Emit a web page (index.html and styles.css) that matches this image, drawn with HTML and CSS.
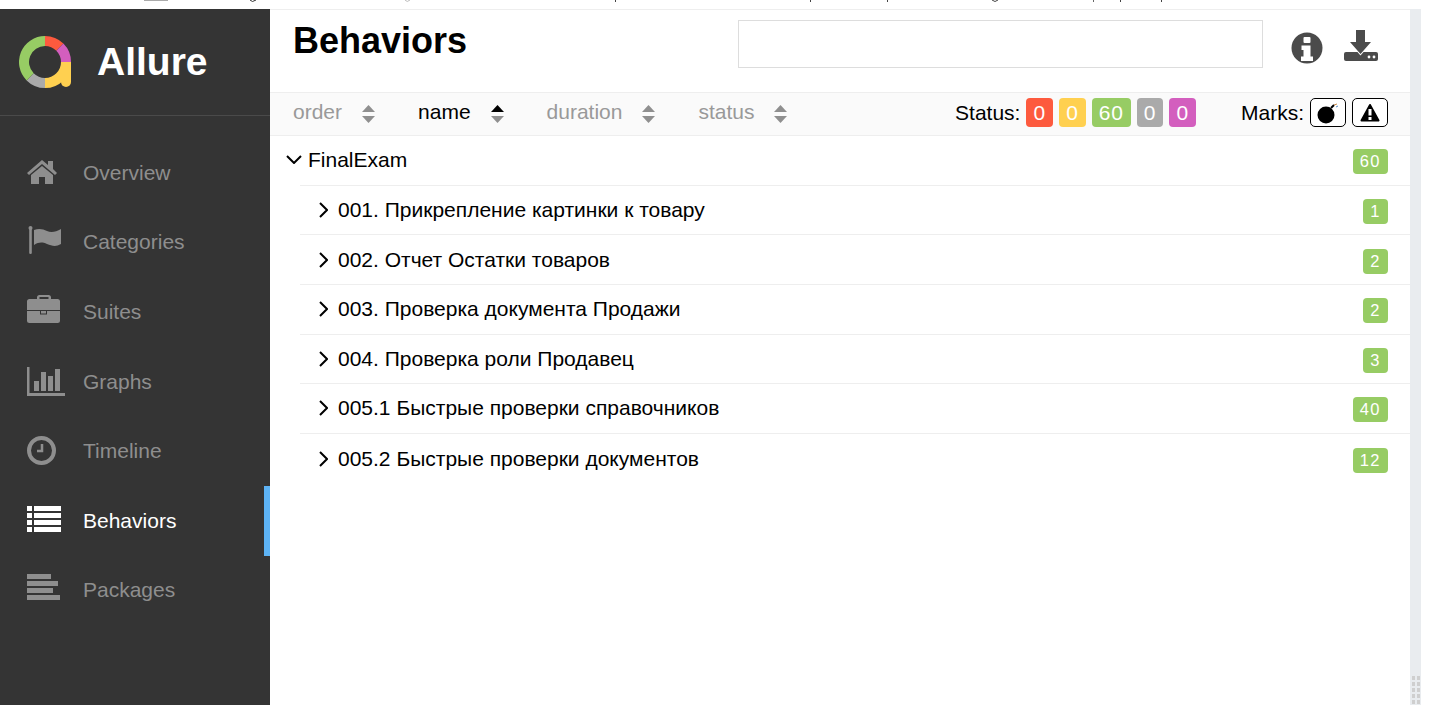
FILE: index.html
```html
<!DOCTYPE html>
<html lang="en">
<head>
  <meta charset="UTF-8" />
  <title>Allure Report - Behaviors</title>
  <link rel="stylesheet" href="styles.css">
</head>
<body>

  <!-- bottom of the page text above, cut off by the capture -->
  <svg class="top-strip" width="1449" height="9" viewBox="0 0 1449 9">
    <rect x="144" y="0" width="24" height="1" fill="#aaa" />
    <path d="M250 0q2 3 6 0" fill="none" stroke="#333" stroke-width="1" />
    <path d="M405 0q2 3 5 0" fill="none" stroke="#bbb" stroke-width="1" />
    <rect x="615" y="0" width="1" height="2" fill="#444" />
    <rect x="810" y="0" width="1" height="2" fill="#444" />
    <rect x="887" y="0" width="1" height="2" fill="#444" />
    <path d="M992 0q3 3 6 0" fill="none" stroke="#444" stroke-width="1" />
    <rect x="1093" y="0" width="1" height="2" fill="#666" />
    <rect x="1120" y="0" width="1" height="2" fill="#444" />
    <rect x="1161" y="0" width="1" height="2" fill="#444" />
  </svg>

  <div class="app">
    <aside class="side-nav">
      <div class="brand">
        <svg class="brand-logo" width="52" height="52" viewBox="0 0 52 52">
          <g fill="none" stroke-width="10">
            <path d="M26 5A21 21 0 0 1 40.85 11.15" stroke="#fd5a3e" />
            <path d="M40.85 11.15A21 21 0 0 1 47 26" stroke="#d35ebe" />
            <path d="M47 26A21 21 0 0 1 26 47" stroke="#ffd050" />
            <path d="M26 47A21 21 0 0 1 11.15 40.85" stroke="#aaa" />
            <path d="M11.15 40.85A21 21 0 0 1 26 5" stroke="#97cc64" />
          </g>
          <path d="M42 26H52V46a5 5 0 0 1-10 0Z" fill="#ffd050" />
        </svg>
        <span class="brand-name">Allure</span>
      </div>

      <ul class="nav-list">
        <li class="nav-item">
          <svg class="nav-icon" viewBox="0 0 40 32">
            <polygon points="15,3 21,8 21,4 26,4 26,12 30,16 28,18 15,7 2,18 0,16" />
            <polygon points="15,9 26,18 26,27 18,27 18,20 12,20 12,27 4,27 4,18" />
          </svg>
          Overview
        </li>
        <li class="nav-item">
          <svg class="nav-icon" viewBox="0 0 40 32">
            <rect x="2.2" y="1" width="2.6" height="27" rx="1.2" />
            <circle cx="3.5" cy="2" r="2" />
            <path d="M7 4C12 2 16 3 20 5S29 6 34 3V18C29 21 25 20 20 18S12 16 7 19Z" />
          </svg>
          Categories
        </li>
        <li class="nav-item">
          <svg class="nav-icon" viewBox="0 0 40 32">
            <path d="M10 3V1.5A2.5 2.5 0 0 1 12.5 -1H21.5A2.5 2.5 0 0 1 24 1.5V3H30.5A2.5 2.5 0 0 1 33 5.5V24.5A2.5 2.5 0 0 1 30.5 27H2.5A2.5 2.5 0 0 1 0 24.5V5.5A2.5 2.5 0 0 1 2.5 3ZM12.500 3H21.500V1H12.500Z" fill-rule="evenodd" />
            <rect x="0" y="14" width="33" height="1" class="nav-cut" />
            <rect x="13.500" y="14.500" width="6" height="3.500" fill="none" stroke="#343434" />
          </svg>
          Suites
        </li>
        <li class="nav-item">
          <svg class="nav-icon" viewBox="0 0 40 32">
            <rect x="0" y="1" width="2.500" height="29" />
            <rect x="0" y="27" width="38" height="3" />
            <rect x="7" y="15" width="5" height="10" />
            <rect x="14" y="6" width="5" height="19" />
            <rect x="21" y="10" width="5" height="15" />
            <rect x="28" y="3" width="5" height="22" />
          </svg>
          Graphs
        </li>
        <li class="nav-item">
          <svg class="nav-icon" viewBox="0 0 40 32">
            <circle cx="14.500" cy="15.500" r="12.500" fill="none" stroke="currentColor" stroke-width="4" />
            <path d="M15 9V16H10" fill="none" stroke="currentColor" stroke-width="2.500" />
          </svg>
          Timeline
        </li>
        <li class="nav-item active">
          <svg class="nav-icon" viewBox="0 0 40 32">
            <rect x="0" y="1" width="5" height="5" /><rect x="7" y="1" width="27" height="5" />
            <rect x="0" y="8" width="5" height="5" /><rect x="7" y="8" width="27" height="5" />
            <rect x="0" y="15" width="5" height="5" /><rect x="7" y="15" width="27" height="5" />
            <rect x="0" y="22" width="5" height="5" /><rect x="7" y="22" width="27" height="5" />
          </svg>
          Behaviors
        </li>
        <li class="nav-item">
          <svg class="nav-icon" viewBox="0 0 40 32">
            <rect x="0" y="0" width="24" height="5" />
            <rect x="0" y="7" width="31" height="5" />
            <rect x="0" y="14" width="26" height="5" />
            <rect x="0" y="21" width="33" height="5" />
          </svg>
          Packages
        </li>
      </ul>
    </aside>

    <main class="content">
      <header class="page-head">
        <h1 class="page-title">Behaviors</h1>
        <input class="search" type="text" />
        <svg class="head-info" width="32" height="32" viewBox="0 0 32 32">
          <circle cx="16" cy="16" r="15.500" fill="#4b4b4b" />
          <rect x="12.500" y="5" width="7" height="6" rx="1" fill="#fff" />
          <path d="M10.500 13.500H19.500V24.500H22V29H10V24.500H12.500V18H10.500Z" fill="#fff" />
        </svg>
        <svg class="head-download" width="34" height="32" viewBox="0 0 34 32">
          <rect x="0" y="22" width="34" height="9" rx="2" fill="#4b4b4b" />
          <polygon points="12,0 21,0 21,12 27,12 16.500,24 6,12 12,12" fill="#4b4b4b" stroke="#fff" stroke-width="2" paint-order="stroke" />
          <circle cx="25" cy="27" r="1.400" fill="#fff" />
          <circle cx="30" cy="27" r="1.400" fill="#fff" />
        </svg>
      </header>

      <div class="toolbar">
        <span class="sort">order <svg class="sort-arrows" width="13" height="18" viewBox="0 0 13 18"><path d="M6.500 0L13 7H0Z" /><path d="M6.500 18L13 11H0Z" /></svg></span>
        <span class="sort current">name <svg class="sort-arrows" width="13" height="18" viewBox="0 0 13 18"><path class="on" d="M6.500 0L13 7H0Z" /><path d="M6.500 18L13 11H0Z" /></svg></span>
        <span class="sort">duration <svg class="sort-arrows" width="13" height="18" viewBox="0 0 13 18"><path d="M6.500 0L13 7H0Z" /><path d="M6.500 18L13 11H0Z" /></svg></span>
        <span class="sort">status <svg class="sort-arrows" width="13" height="18" viewBox="0 0 13 18"><path d="M6.500 0L13 7H0Z" /><path d="M6.500 18L13 11H0Z" /></svg></span>

        <div class="filter status-filter">
          Status:
          <span class="stat failed">0</span>
          <span class="stat broken">0</span>
          <span class="stat passed">60</span>
          <span class="stat skipped">0</span>
          <span class="stat unknown">0</span>
        </div>
        <div class="filter">
          Marks:
          <span class="mark">
            <svg width="24" height="22" viewBox="0 0 24 22">
              <circle cx="10" cy="13" r="8.500" fill="#000" />
              <path d="M15 6l3-3" stroke="#000" stroke-width="2" />
              <path d="M18 3l3-1" stroke="#c98a4a" stroke-width="1" />
              <path d="M20 5l2-1" stroke="#5a8fc9" stroke-width="1" />
            </svg>
          </span>
          <span class="mark">
            <svg width="24" height="22" viewBox="0 0 24 22">
              <path d="M12 3L20.500 18.500H3.500Z" fill="#000" stroke="#000" stroke-width="2" stroke-linejoin="round" />
              <rect x="10.500" y="7" width="3" height="6.500" fill="#fff" />
              <rect x="10.500" y="15" width="3" height="3" fill="#fff" />
            </svg>
          </span>
        </div>
      </div>

      <div class="tree">
        <div class="tree-top">
          <svg class="chevron-down" width="16" height="9" viewBox="0 0 16 9"><path d="M1 1L8 8L15 1" /></svg>
          <span class="tree-name">FinalExam</span>
          <span class="count">60</span>
        </div>
        <div class="tree-children">
          <div class="tree-row">
            <svg class="chevron" width="10" height="16" viewBox="0 0 10 16"><path d="M2 1L9 8L2 15" /></svg>
            <span class="tree-name">001. Прикрепление картинки к товару</span>
            <span class="count">1</span>
          </div>
          <div class="tree-row">
            <svg class="chevron" width="10" height="16" viewBox="0 0 10 16"><path d="M2 1L9 8L2 15" /></svg>
            <span class="tree-name">002. Отчет Остатки товаров</span>
            <span class="count">2</span>
          </div>
          <div class="tree-row">
            <svg class="chevron" width="10" height="16" viewBox="0 0 10 16"><path d="M2 1L9 8L2 15" /></svg>
            <span class="tree-name">003. Проверка документа Продажи</span>
            <span class="count">2</span>
          </div>
          <div class="tree-row">
            <svg class="chevron" width="10" height="16" viewBox="0 0 10 16"><path d="M2 1L9 8L2 15" /></svg>
            <span class="tree-name">004. Проверка роли Продавец</span>
            <span class="count">3</span>
          </div>
          <div class="tree-row">
            <svg class="chevron" width="10" height="16" viewBox="0 0 10 16"><path d="M2 1L9 8L2 15" /></svg>
            <span class="tree-name">005.1 Быстрые проверки справочников</span>
            <span class="count">40</span>
          </div>
          <div class="tree-row">
            <svg class="chevron" width="10" height="16" viewBox="0 0 10 16"><path d="M2 1L9 8L2 15" /></svg>
            <span class="tree-name">005.2 Быстрые проверки документов</span>
            <span class="count">12</span>
          </div>
        </div>
      </div>
    </main>

    <div class="side-track">
      <svg class="grip" width="8" height="29" viewBox="0 0 8 29">
        <defs>
          <pattern id="gripDots" width="5" height="6" patternUnits="userSpaceOnUse">
            <rect width="3" height="4" fill="#cfcfcf" />
          </pattern>
        </defs>
        <rect width="8" height="29" fill="url(#gripDots)" />
      </svg>
    </div>
  </div>

</body>
</html>
```

FILE: styles.css
```css
* {
  box-sizing: border-box;
}

html, body {
  height: 705px;
}

body {
  margin: 0;
  overflow: hidden;
  background-color: #fff;
  color: #000;
  font-family: "Liberation Sans", Arial, sans-serif;
  font-size: 21px;
}

.top-strip {
  display: block;
}

.app {
  display: flex;
  height: 696px;
}

/* sidebar */
.side-nav {
  flex: 0 0 270px;
  background-color: #343434;
  color: #8e8e8e;
}

.brand {
  display: flex;
  align-items: center;
  gap: 26px;
  height: 107px;
  padding-left: 19px;
  border-bottom: 1px solid #4a4a4a;
}

.brand-name {
  color: #fff;
  font-size: 39px;
  font-weight: bold;
}

.nav-list {
  list-style: none;
  margin: 0;
  padding: 22px 0 0;
}

.nav-item {
  display: flex;
  align-items: center;
  gap: 16px;
  height: 69.6px;
  padding-left: 27px;
  border-right: 6px solid transparent;
}

.nav-item.active {
  color: #fff;
  border-right-color: #5db3f5;
}

.nav-icon {
  flex: none;
  width: 40px;
  height: 32px;
  fill: currentColor;
  overflow: visible;
}

.nav-cut {
  fill: #343434;
}

/* main column */
.content {
  flex: 0 0 1140px;
  min-width: 0;
}

.page-head {
  display: flex;
  align-items: flex-start;
  height: 83px;
  padding: 10px 32px 0 23px;
  border-top: 1px solid #eee;
}

.page-title {
  margin: 1px auto 0 0;
  font-size: 36px;
  font-weight: bold;
  line-height: 40px;
}

.search {
  width: 525px;
  height: 48px;
  margin-right: 28px;
  padding: 0;
  border: 1px solid #ddd;
}

.head-info {
  flex: none;
  margin-top: 12px;
  margin-right: 21px;
}

.head-download {
  flex: none;
  margin-top: 10px;
}

.toolbar {
  display: flex;
  align-items: center;
  height: 44px;
  padding: 0 22px 3px 23px;
  background-color: #fafafa;
  border-top: 1px solid #eee;
  border-bottom: 1px solid #eee;
}

.sort {
  display: flex;
  align-items: center;
  gap: 20px;
  margin-right: 43px;
  margin-bottom: 2px;
  color: #999;
}

.sort.current {
  color: #000;
}

.sort-arrows {
  margin-top: 5px;
  fill: #8f8f8f;
}

.sort-arrows .on {
  fill: #000;
}

.filter {
  display: flex;
  align-items: center;
  gap: 6px;
}

.status-filter {
  margin-left: auto;
  margin-right: 45px;
}

.stat {
  height: 29px;
  padding: 0 7.1px;
  border-radius: 4px;
  color: #fff;
  letter-spacing: 0.75px;
  line-height: 29px;
}

.failed { background-color: #fd5a3e; }
.broken { background-color: #ffd050; }
.passed { background-color: #97cc64; }
.skipped { background-color: #aaa; }
.unknown { background-color: #d35ebe; }

.mark {
  display: flex;
  align-items: center;
  justify-content: center;
  width: 36px;
  height: 29px;
  background-color: #fff;
  border: 1px solid #000;
  border-radius: 5px;
}

/* tree */
.tree-top,
.tree-row {
  display: flex;
  align-items: center;
  padding-right: 22px;
}

.tree-top {
  height: 48.8px;
  padding-left: 16px;
  padding-bottom: 1px;
}

.chevron-down {
  margin-right: 6px;
  fill: none;
  stroke: #000;
  stroke-width: 2;
}

.tree-children {
  margin-left: 30px;
  border-top: 1px solid #eee;
}

.tree-row {
  height: 49.6px;
  padding-left: 18px;
  border-bottom: 1px solid #eee;
}

.tree-row:last-child {
  border-bottom: none;
}

.chevron {
  margin-right: 10px;
  fill: none;
  stroke: #000;
  stroke-width: 2;
}

.tree-name {
  margin-right: auto;
}

.count {
  height: 25px;
  margin-top: 3px;
  padding: 0 7px;
  min-width: 25px;
  background-color: #97cc64;
  border-radius: 4px;
  color: #fff;
  font-size: 16.5px;
  letter-spacing: 1.5px;
  line-height: 25px;
  text-align: center;
}

/* scrollbar looking strip on the right */
.side-track {
  display: flex;
  flex: 0 0 11px;
  flex-direction: column;
  justify-content: flex-end;
  align-items: center;
  background-color: #e9ecef;
}
```
